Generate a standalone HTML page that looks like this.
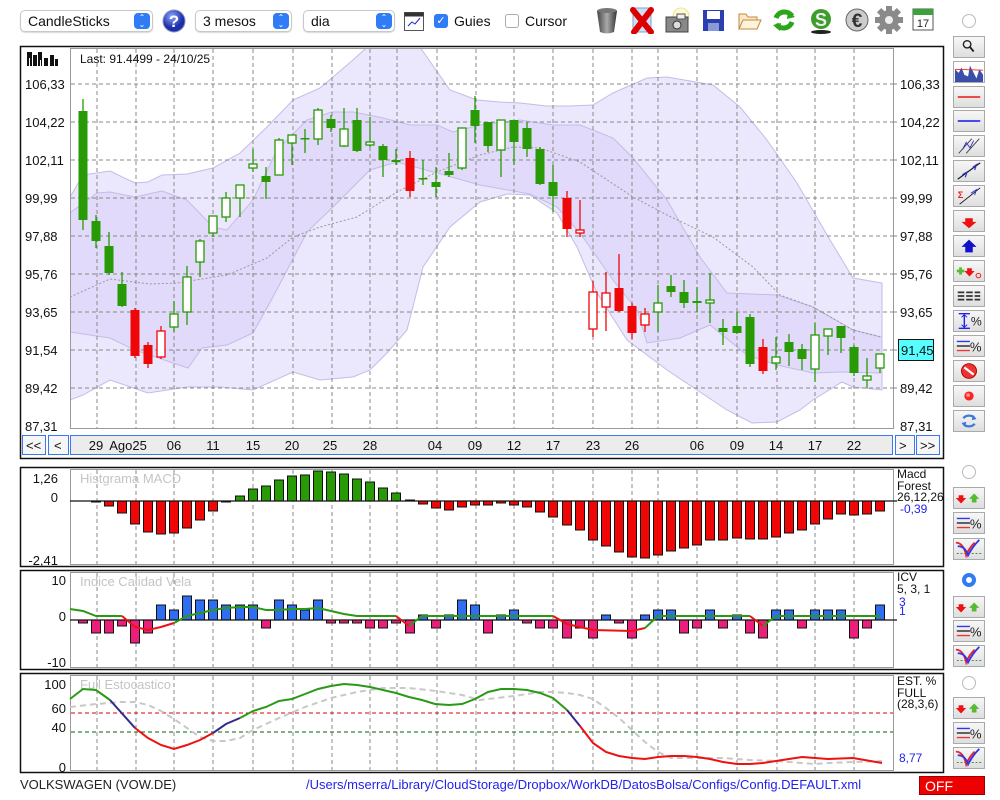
<!DOCTYPE html>
<html><head><meta charset="utf-8"><style>
*{margin:0;padding:0;box-sizing:border-box}
body{width:1000px;height:800px;background:#fff;font-family:"Liberation Sans",sans-serif;position:relative;overflow:hidden;color:#111}
.sel{position:absolute;top:10px;height:22px;border:1px solid #c8c8c8;border-radius:5px;background:#fff;font-size:14px;padding:2px 0 0 7px;box-shadow:0 1px 1px rgba(0,0,0,.15)}
.sel .ar{position:absolute;right:2px;top:2px;width:16px;height:16px;border-radius:4px;background:#2f7cf6;color:#fff;font-size:8px;line-height:7px;text-align:center;padding-top:1px}
.cb{position:absolute;top:14px;width:14px;height:14px;border-radius:3px}
.lbl{position:absolute;top:13px;font-size:14px}
.sb{position:absolute;left:953px;width:32px;height:22px;border:1px solid #aaa;background:linear-gradient(#f7f7f7,#dedede)}
.rad{position:absolute;left:962px;width:14px;height:14px;border-radius:50%;border:1px solid #bbb;background:#fff}
.ic{position:absolute;top:6px}
</style></head><body>
<div class="sel" style="left:20px;width:133px">CandleSticks<div class="ar">⌃<br>⌄</div></div>
<svg style="position:absolute;left:162px;top:9px" width="24" height="24"><defs><radialGradient id="qg" cx="40%" cy="30%"><stop offset="0" stop-color="#8ea8ff"/><stop offset="1" stop-color="#1c2fa8"/></radialGradient></defs><circle cx="12" cy="12" r="11" fill="url(#qg)" stroke="#8890c0"/><text x="12" y="18" text-anchor="middle" font-size="17" font-weight="bold" fill="#fff" font-family="Liberation Sans">?</text></svg>
<div class="sel" style="left:195px;width:97px">3 mesos<div class="ar">⌃<br>⌄</div></div>
<div class="sel" style="left:303px;width:92px">dia<div class="ar">⌃<br>⌄</div></div>
<svg style="position:absolute;left:404px;top:12px" width="20" height="19"><rect x="0.5" y="0.5" width="19" height="18" fill="#fff" stroke="#555"/><rect x="0.5" y="0.5" width="19" height="4" fill="#333"/><path d="M4 14 L8 10 L11 12 L16 6" stroke="#22c" fill="none"/></svg>
<div class="cb" style="left:434px;background:#2f7cf6;color:#fff;font-size:11px;text-align:center;line-height:14px">✓</div>
<div class="lbl" style="left:454px">Guies</div>
<div class="cb" style="left:505px;border:1px solid #aaa;background:#fff"></div>
<div class="lbl" style="left:525px">Cursor</div>
<svg class="ic" style="left:585px" width="24" height="28"><defs><linearGradient id="tg" x1="0" x2="1"><stop offset="0" stop-color="#444"/><stop offset=".5" stop-color="#aaa"/><stop offset="1" stop-color="#333"/></linearGradient></defs><ellipse cx="12" cy="5" rx="10" ry="3" fill="#777"/><path d="M2 5 L5 26 Q12 29 19 26 L22 5 Q12 9 2 5Z" fill="url(#tg)"/></svg>
<svg class="ic" style="left:620px" width="26" height="28"><rect x="3" y="2" width="18" height="24" fill="#cfe0f5" stroke="#7aa0d8"/><path d="M3 4 L21 26 M21 4 L4 26" stroke="#d00" stroke-width="6" stroke-linecap="round"/></svg>
<svg class="ic" style="left:654px" width="26" height="28"><circle cx="17" cy="10" r="8" fill="#fffbd0" stroke="#e8e4a0"/><rect x="2" y="11" width="22" height="15" fill="#888" stroke="#444"/><circle cx="13" cy="19" r="4" fill="#ddd" stroke="#333"/><rect x="13" y="8" width="8" height="5" fill="#eee" stroke="#555"/></svg>
<svg class="ic" style="left:692px" width="24" height="28"><rect x="1" y="4" width="21" height="21" fill="#2c3fb0"/><rect x="5" y="5" width="13" height="8" fill="#fff"/><rect x="6" y="17" width="11" height="8" fill="#8a9ad8"/></svg>
<svg class="ic" style="left:727px" width="26" height="28"><path d="M2 8 L9 8 L11 11 L20 11 L20 23 L2 23Z" fill="#fbe8c8" stroke="#c08a40"/><path d="M2 23 L6 14 L24 14 L20 23Z" fill="#fff2dc" stroke="#c08a40"/></svg>
<svg class="ic" style="left:761px" width="26" height="28"><path d="M5 12 A9 9 0 0 1 21 10" stroke="#2aa61a" stroke-width="5" fill="none"/><path d="M21 16 A9 9 0 0 1 5 18" stroke="#2aa61a" stroke-width="5" fill="none"/><path d="M17 5 L24 11 L16 13Z" fill="#2aa61a"/><path d="M9 25 L2 19 L10 17Z" fill="#2aa61a"/></svg>
<svg class="ic" style="left:798px" width="26" height="28"><ellipse cx="13" cy="26" rx="10" ry="2" fill="#222"/><circle cx="13" cy="13" r="10" fill="#3c9c2c"/><text x="13" y="20" text-anchor="middle" font-size="18" font-weight="bold" fill="#eee" font-family="Liberation Sans">S</text></svg>
<svg class="ic" style="left:833px" width="26" height="28"><circle cx="14" cy="14" r="11" fill="#ccc" stroke="#666"/><text x="14" y="21" text-anchor="middle" font-size="19" font-weight="bold" fill="#333" font-family="Liberation Sans">€</text></svg>
<svg class="ic" style="left:865px" width="28" height="28"><g fill="#8a8a8a"><circle cx="14" cy="14" r="10"/><rect x="11" y="0" width="6" height="28"/><rect x="0" y="11" width="28" height="6"/><rect x="11" y="0" width="6" height="28" transform="rotate(45 14 14)"/><rect x="11" y="0" width="6" height="28" transform="rotate(-45 14 14)"/></g><circle cx="14" cy="14" r="4" fill="#eee"/></svg>
<svg class="ic" style="left:902px" width="22" height="26"><rect x="1" y="3" width="20" height="21" fill="#fff" stroke="#555"/><rect x="1" y="3" width="20" height="6" fill="#3ca03c"/><text x="11" y="21" text-anchor="middle" font-size="11" fill="#222" font-family="Liberation Sans">17</text></svg>
<div class="rad" style="top:14px"></div>

<div id="side"></div>

<svg id="ch" style="position:absolute;left:0;top:0" width="1000" height="800" font-family="Liberation Sans"></svg>

<div style="position:absolute;left:20px;top:777px;font-size:13px;color:#222">VOLKSWAGEN (VOW.DE)</div>
<div style="position:absolute;left:306px;top:777px;font-size:13px;color:#2222ee">/Users/mserra/Library/CloudStorage/Dropbox/WorkDB/DatosBolsa/Configs/Config.DEFAULT.xml</div>
<div style="position:absolute;left:919px;top:776px;width:66px;height:19px;background:#ee0000;border:1px solid #900;color:#fff;font-size:14px;padding:1px 0 0 5px">OFF</div>

<script>
(function(){
var S=document.getElementById('ch');var h='';
var NS=function(a){return a.map(function(p){return p.join(',')}).join(' ')};
var vx=[97,136,174,213,253,293,332,370,397,437,476,514,553,593,632,658,697,737,777,815,854];
function vgrid(y1,y2){var s='';vx.forEach(function(x){s+='<line x1="'+x+'" y1="'+y1+'" x2="'+x+'" y2="'+y2+'" stroke="#888" stroke-dasharray="4,3"/>'});return s}
function txt(x,y,t,o){o=o||{};return '<text x="'+x+'" y="'+y+'" font-size="'+(o.fs||13)+'" fill="'+(o.c||'#111')+'" '+(o.a?'text-anchor="'+o.a+'"':'')+'>'+t+'</text>'}
h+='<rect x="20.5" y="46.5" width="923" height="412" fill="#fff" stroke="#111" stroke-width="1.5"/>';
h+='<rect x="70.5" y="48.5" width="823" height="380" fill="#fff" stroke="#999"/>';
h+='<clipPath id="cp"><rect x="71" y="49" width="822" height="379"/></clipPath>';
var ou=[[70,197],[83,175],[110,171],[135,183],[148,182],[162,175],[187,174],[213,168],[240,153],[267,127],[293,100],[320,88],[353,60],[375,40],[415,40],[450,90],[477,100],[500,102],[520,103],[547,106],[570,106],[593,105],[613,93],[647,78],[667,77],[713,85],[740,107],[767,140],[797,183],[830,240],[853,278],[882,283]];
var ol=[[882,390],[853,387],[842,382],[813,400],[800,410],[777,422],[752,423],[727,410],[697,390],[667,370],[627,340],[597,293],[577,247],[557,213],[530,195],[507,194],[480,202],[450,227],[423,267],[407,330],[387,353],[370,370],[353,377],[320,380],[293,372],[253,390],[220,387],[187,387],[148,393],[110,380],[83,395],[70,400]];
var iu=[[70,213],[97,193],[110,192],[135,197],[162,191],[187,200],[213,227],[227,230],[253,200],[277,150],[307,120],[332,112],[353,112],[383,118],[410,125],[437,125],[453,132],[480,125],[520,120],[553,125],[580,125],[613,138],[633,158],[667,200],[700,257],[727,293],[777,295],[813,307],[853,330],[882,337]];
var il=[[882,373],[842,372],[813,373],[777,365],[747,355],[710,325],[680,338],[647,343],[637,310],[613,280],[580,233],[557,207],[530,194],[480,185],[437,173],[397,162],[370,170],[333,207],[307,232],[273,297],[253,333],[227,345],[202,348],[188,368],[173,363],[135,350],[110,338],[70,332]];
var ma=[[70,297],[110,279],[150,284],[177,283],[227,275],[267,258],[293,237],[320,227],[357,217],[397,192],[437,172],[480,155],[513,147],[540,148],[580,162],[633,197],[667,215],[713,237],[753,267],[780,295],[813,307],[853,330],[880,337]];
h+='<g clip-path="url(#cp)"><polygon points="'+NS(ou.concat(ol))+'" fill="#ebe7fc" stroke="#c4bce6"/><polygon points="'+NS(iu.concat(il))+'" fill="#e1dafa" stroke="#c4bce6"/><polyline points="'+NS(ma)+'" fill="none" stroke="#999" stroke-dasharray="2,2"/></g>';
for(var i=0;i<9;i++){var y=84+i*38;h+='<line x1="71" y1="'+y+'" x2="893" y2="'+y+'" stroke="#888" stroke-dasharray="4,3"/><line x1="893" y1="'+y+'" x2="897" y2="'+y+'" stroke="#888"/>'}
h+=vgrid(49,428);
var lab=['106,33','104,22','102,11','99,99','97,88','95,76','93,65','91,54','89,42','87,31'];
lab.forEach(function(t,i){var y=89+i*38;h+=txt(25,y,t);if(t!='91,54')h+=txt(900,y,t)});
h+='<rect x="898.5" y="339.5" width="35" height="21" fill="#5ff" stroke="#111"/>'+txt(901,355,'91,45');
h+=txt(80,63,'Last: 91.4499 - 24/10/25',{fs:12});
h+='<g fill="#111"><rect x="27" y="52" width="5" height="14"/><rect x="33" y="55" width="4" height="11"/><rect x="38" y="52" width="4" height="14"/><rect x="44" y="58" width="4" height="8"/><rect x="50" y="55" width="4" height="11"/><rect x="55" y="59" width="3" height="7"/></g><g fill="#fff"><rect x="29" y="58" width="1" height="8"/><rect x="40" y="60" width="1" height="6"/></g>';
var C=[[83,111,220,99,230,'g'],[96,221,241,215,248,'g'],[109,246,273,232,275,'g'],[122,284,306,272,307,'g'],[135,310,356,308,358,'r'],[148,345,364,342,368,'r'],[161,331,357,326,359,'wr'],[174,314,327,301,332,'w'],[187,277,312,266,325,'w'],[200,241,262,239,277,'w'],[213,216,233,216,237,'w'],[226,198,217,192,222,'w'],[240,185,198,185,217,'w'],[253,164,168,149,172,'w'],[266,176,182,167,199,'g'],[279,140,175,138,175,'w'],[292,135,143,135,165,'w'],[305,138,139,129,153,'g'],[318,110,139,108,145,'w'],[331,119,128,115,132,'g'],[344,129,146,108,147,'w'],[357,120,151,108,152,'g'],[370,142,145,117,147,'w'],[383,146,160,144,177,'g'],[396,160,162,149,165,'g'],[410,158,191,151,197,'r'],[423,178,179,160,185,'g'],[436,182,187,167,197,'g'],[449,171,175,153,177,'g'],[462,128,168,128,170,'w'],[475,110,126,96,143,'g'],[488,122,146,122,152,'g'],[501,120,150,120,177,'w'],[514,120,142,120,165,'g'],[527,128,149,122,157,'g'],[540,149,184,147,185,'g'],[553,182,196,165,212,'g'],[567,198,229,191,237,'r'],[580,230,233,200,237,'wr'],[593,292,329,281,337,'wr'],[606,293,307,272,331,'wr'],[619,288,311,254,312,'r'],[632,306,333,303,339,'r'],[645,314,325,308,332,'wr'],[658,303,312,285,332,'w'],[671,286,292,275,297,'g'],[684,292,303,280,308,'g'],[697,301,303,287,312,'g'],[710,300,303,273,323,'w'],[723,328,332,319,345,'g'],[737,326,333,312,334,'g'],[750,317,364,314,367,'g'],[763,347,371,339,374,'r'],[776,357,363,337,370,'w'],[789,342,352,334,366,'g'],[802,349,359,344,370,'g'],[815,335,369,323,382,'w'],[828,329,336,329,355,'w'],[841,326,338,326,353,'g'],[854,347,373,345,376,'g'],[867,376,380,358,388,'w'],[880,354,368,354,373,'w']];
var G='#279a05',R='#ef0707';
C.forEach(function(c){var x=c[0],t=c[1],b=c[2],wt=c[3],wb=c[4],k=c[5];var col=(k=='g'||k=='w')?G:R;var hh=Math.max(b-t,1.5);
h+='<line x1="'+x+'" y1="'+wt+'" x2="'+x+'" y2="'+wb+'" stroke="'+col+'" stroke-width="1.3"/>';
if(k=='g'||k=='r')h+='<rect x="'+(x-4.5)+'" y="'+t+'" width="9" height="'+hh+'" fill="'+col+'"/>';
else h+='<rect x="'+(x-4)+'" y="'+t+'" width="8" height="'+hh+'" fill="#fff" stroke="'+col+'" stroke-width="1.3"/>';});
h+='<rect x="22.5" y="435.5" width="23" height="19" fill="#f6f6f6" stroke="#3a78f0"/><rect x="48.5" y="435.5" width="20" height="19" fill="#f6f6f6" stroke="#3a78f0"/><rect x="70.5" y="435.5" width="822" height="19" fill="#ececec" stroke="#3a78f0"/><rect x="895.5" y="435.5" width="19" height="19" fill="#f6f6f6" stroke="#3a78f0"/><rect x="916.5" y="435.5" width="23" height="19" fill="#f6f6f6" stroke="#3a78f0"/>';
h+=txt(26,450,'&lt;&lt;')+txt(54,450,'&lt;')+txt(899,450,'&gt;')+txt(920,450,'&gt;&gt;');
[[96,'29'],[128,'Ago25'],[174,'06'],[213,'11'],[253,'15'],[292,'20'],[330,'25'],[370,'28'],[435,'04'],[475,'09'],[514,'12'],[553,'17'],[593,'23'],[632,'26'],[697,'06'],[737,'09'],[776,'14'],[815,'17'],[854,'22']].forEach(function(d){h+=txt(d[0],450,d[1],{a:'middle'})});
function panel(y1,y2){return '<rect x="20.5" y="'+(y1+0.5)+'" width="923" height="'+(y2-y1)+'" fill="#fff" stroke="#111" stroke-width="1.5"/><rect x="70.5" y="'+(y1+2.5)+'" width="823" height="'+(y2-y1-4)+'" fill="#fff" stroke="#999"/>'+vgrid(y1+3,y2-2)}
h+=panel(467,566);
h+=txt(80,483,'Histgrama MACD',{c:'#c4c4c4'});
h+=txt(58,483,'1,26',{a:'end'})+txt(58,502,'0',{a:'end'})+txt(58,565,'-2,41',{a:'end'});
var M=[0,-1,-5,-12,-23,-31,-33,-32,-27,-19,-10,-1,5,12,15,21,25,26,30,29,27,22,19,13,8,1,-3,-7,-9,-6,-4,-4,-2,-4,-6,-11,-16,-24,-29,-39,-45,-51,-56,-57,-54,-50,-47,-44,-39,-39,-37,-38,-38,-36,-32,-29,-23,-18,-13,-14,-13,-10];
M.forEach(function(v,i){if(!C[i]||v==0)return;var x=C[i][0];var y=v>0?501-v:501;h+='<rect x="'+(x-4.5)+'" y="'+y+'" width="9" height="'+Math.abs(v)+'" fill="'+(v>0?G:R)+'" stroke="#111"/>'});
h+='<line x1="70" y1="501" x2="897" y2="501" stroke="#111" stroke-width="1.3"/>';
h+=txt(897,478,'Macd',{fs:12})+txt(897,490,'Forest',{fs:12})+txt(897,501,'26,12,26',{fs:12})+txt(900,513,'-0,39',{fs:12,c:'#2222ee'});
h+=panel(570,669);
h+=txt(80,586,'Indice Calidad Vela',{c:'#c4c4c4'});
h+=txt(66,585,'10',{a:'end'})+txt(66,621,'0',{a:'end'})+txt(66,667,'-10',{a:'end'});
var V=[-3,-13,-13,-6,-23,-13,15,10,24,20,20,15,15,15,-8,20,15,10,20,-3,-3,-3,-8,-8,-3,-13,5,-8,5,20,15,-13,5,10,-3,-8,-8,-18,-8,-18,5,-3,-18,5,10,10,-13,-8,10,-8,5,-13,-18,10,10,-8,10,10,10,-18,-8,15];
V.forEach(function(v,i){if(!C[i])return;var x=C[i][0];var y=v>0?620-v:620;h+='<rect x="'+(x-4.5)+'" y="'+y+'" width="9" height="'+Math.abs(v)+'" fill="'+(v>0?'#2f6ef0':'#ea1f7c')+'" stroke="#111"/>'});
h+='<line x1="70" y1="620" x2="897" y2="620" stroke="#111" stroke-width="1.3"/>';
var lg=function(p,c){return '<polyline points="'+NS(p)+'" fill="none" stroke="'+c+'" stroke-width="2"/>'};
h+=lg([[70,609],[83,611],[96,616],[122,616]],'#2a9a14')+lg([[122,616],[135,627],[148,630],[161,627],[174,623]],'#ee1111')+lg([[174,623],[187,616],[200,613],[213,610],[226,608],[240,607],[253,607],[266,610],[279,610],[292,609],[305,609],[318,608],[331,611],[344,614],[357,616],[396,616]],'#2a9a14')+lg([[396,616],[409,626]],'#ee1111')+lg([[409,626],[422,616],[553,616]],'#2a9a14')+lg([[553,616],[567,624],[593,630],[632,631],[645,628]],'#ee1111')+lg([[645,628],[658,616],[750,616]],'#2a9a14')+lg([[750,616],[763,626]],'#ee1111')+lg([[763,626],[776,616],[880,616]],'#2a9a14');
h+=txt(897,581,'ICV',{fs:12})+txt(897,593,'5, 3, 1',{fs:12})+txt(899,606,'3',{fs:12,c:'#2222ee'})+txt(899,615,'1',{fs:12,c:'#2222ee'});
h+=panel(673,772);
h+=txt(80,689,'Full Estocastico',{c:'#c4c4c4'});
h+='<line x1="71" y1="713" x2="893" y2="713" stroke="#d00" stroke-dasharray="4,3"/><line x1="71" y1="732" x2="893" y2="732" stroke="#060" stroke-dasharray="4,3"/>';
h+=txt(66,689,'100',{a:'end'})+txt(66,713,'60',{a:'end'})+txt(66,732,'40',{a:'end'})+txt(66,772,'0',{a:'end'});
h+='<polyline points="'+NS([[70,707],[96,704],[122,702],[135,702],[148,705],[161,711],[174,719],[187,728],[200,737],[213,741],[226,741],[240,738],[253,730],[279,718],[305,707],[331,698],[357,692],[383,688],[409,688],[436,691],[462,695],[480,700],[514,696],[540,692],[553,692],[567,693],[580,695],[593,699],[606,708],[619,718],[632,730],[645,742],[658,752],[671,758],[697,758],[723,758],[750,760],[776,761],[802,763],[815,764],[828,763],[854,762],[882,761]])+'" fill="none" stroke="#c8c8c8" stroke-width="2" stroke-dasharray="6,4"/>';
h+=lg([[70,699],[83,689],[96,690],[110,700]],'#2a9a14')+lg([[110,700],[135,728]],'#332a8a')+lg([[135,728],[148,738],[161,745],[174,749],[187,745],[200,740],[213,733]],'#ee1111')+lg([[213,733],[226,724],[240,718]],'#332a8a')+lg([[240,718],[253,711],[266,707],[279,701],[292,699],[305,694],[318,689],[331,686],[344,684],[357,685],[370,687],[383,690],[396,693],[409,697],[422,700],[435,704],[449,705],[462,704],[475,699],[488,692],[501,689],[514,689],[527,690],[540,693],[553,698],[567,710]],'#2a9a14')+lg([[567,710],[580,726]],'#332a8a')+lg([[580,726],[593,743],[606,752],[619,756],[632,758],[645,759],[658,757],[671,756],[684,756],[697,757],[710,759],[723,762],[737,764],[750,764],[763,763],[776,761],[789,759],[802,757],[815,758],[828,759],[853,758],[882,763]],'#ee1111');
h+=txt(897,685,'EST. %',{fs:12})+txt(897,697,'FULL',{fs:12})+txt(897,708,'(28,3,6)',{fs:12})+txt(899,762,'8,77',{fs:12,c:'#2222ee'});
S.innerHTML=h;
var sd='';
var ico={
mag:'<circle cx="14" cy="8" r="4" fill="none" stroke="#222" stroke-width="1.5"/><line x1="17" y1="11" x2="21" y2="16" stroke="#222" stroke-width="2"/>',
chart:'<rect x="0" y="0" width="32" height="22" fill="#fff"/><path d="M1 22 L1 8 L5 12 L8 6 L11 14 L15 16 L17 4 L20 10 L24 18 L27 8 L31 14 L31 22Z" fill="#3a4fa8"/><path d="M1 8 L31 9" stroke="#e22" />',
hr:'<line x1="4" y1="11" x2="28" y2="11" stroke="#e33" stroke-width="2"/>',
hb:'<line x1="4" y1="11" x2="28" y2="11" stroke="#33e" stroke-width="2"/>',
chan:'<path d="M5 19 L19 3 M13 19 L27 3" stroke="#444"/><path d="M9 15 L13 7 L17 13 L21 5" stroke="#33c" fill="none"/>',
tr:'<path d="M4 20 L28 2" stroke="#111" stroke-width="1.3"/><path d="M9 15 L14 12 L12 18 M20 7 L24 4 L22 10" stroke="#33c" fill="none" stroke-width="1.3"/>',
sig:'<path d="M6 20 L28 2" stroke="#111"/><text x="4" y="13" font-size="10" fill="#e22" font-weight="bold">Σ</text><path d="M18 8 L24 4 L22 10" stroke="#33c" fill="none"/>',
dn:'<path d="M12 8 L20 8 L20 12 L24 12 L16 19 L8 12 L12 12Z" fill="#e11"/>',
up:'<path d="M12 18 L20 18 L20 12 L24 12 L16 4 L8 12 L12 12Z" fill="#11c"/>',
pm:'<path d="M3 11 L11 11 M7 7 L7 15" stroke="#5b3" stroke-width="3"/><path d="M14 8 L19 8 L19 11 L22 11 L16.5 17 L11 11 L14 11Z" fill="#e11"/><circle cx="26" cy="16" r="2.5" fill="none" stroke="#e11"/>',
eq:'<g stroke="#333" stroke-width="2"><line x1="4" y1="7" x2="28" y2="7" stroke-dasharray="7,2"/><line x1="4" y1="11" x2="28" y2="11" stroke-dasharray="7,2"/><line x1="4" y1="15" x2="28" y2="15" stroke-dasharray="7,2"/></g>',
pct1:'<path d="M5 3 L17 3 M5 19 L17 19 M11 4 L11 18" stroke="#22e" stroke-width="1.5"/><path d="M8 7 L11 4 L14 7 M8 15 L11 18 L14 15" stroke="#22e" fill="none"/><text x="18" y="16" font-size="13" fill="#222">%</text>',
pct2:'<line x1="3" y1="6" x2="17" y2="6" stroke="#33e" stroke-width="1.5"/><line x1="3" y1="11" x2="17" y2="11" stroke="#222" stroke-width="1.5"/><line x1="3" y1="16" x2="17" y2="16" stroke="#e33" stroke-width="1.5"/><text x="17" y="17" font-size="14" fill="#222">%</text>',
no:'<circle cx="16" cy="11" r="8" fill="#e33" stroke="#a00"/><line x1="11" y1="7" x2="21" y2="15" stroke="#fff" stroke-width="2.5"/>',
rec:'<circle cx="16" cy="11" r="5" fill="#f22"/><circle cx="15" cy="10" r="2" fill="#f99"/>',
ref:'<path d="M10 8 A7 6 0 0 1 22 8" stroke="#3a7ad8" stroke-width="2.5" fill="none"/><path d="M22 14 A7 6 0 0 1 10 14" stroke="#3a7ad8" stroke-width="2.5" fill="none"/><path d="M20 4 L24 9 L19 10Z M12 18 L8 13 L13 12Z" fill="#3a7ad8"/>',
du:'<path d="M5 8 L10 8 L10 11 L13 11 L7.5 17 L2 11 L5 11Z" fill="#e11"/><path d="M19 16 L24 16 L24 12 L27 12 L21.5 6 L16 12 L19 12Z" fill="#5b3"/>',
vv:'<line x1="3" y1="16" x2="29" y2="16" stroke="#282" stroke-dasharray="2,2"/><path d="M2 4 Q10 4 13 18 Q16 10 22 4" stroke="#e22" stroke-width="2" fill="none"/><path d="M4 8 Q12 8 15 18 Q20 8 27 1" stroke="#33e" stroke-width="2" fill="none"/>'
};
var btns=[['mag',36],['chart',61],['hr',86],['hb',110],['chan',135],['tr',160],['sig',185],['dn',210],['up',235],['pm',260],['eq',285],['pct1',310],['pct2',335],['no',360],['rec',385],['ref',410],['du',487],['pct2',512],['vv',538],['du',596],['pct2',620],['vv',645],['du',697],['pct2',722],['vv',747]];
btns.forEach(function(b){sd+='<div class="sb" style="top:'+b[1]+'px"><svg width="30" height="20" viewBox="0 0 32 22" preserveAspectRatio="none">'+ico[b[0]]+'</svg></div>'});
sd+='<div class="rad" style="top:465px"></div><div class="rad" style="top:676px"></div><div class="rad" style="top:573px;border:4px solid #2f7cf6"></div>';
document.getElementById('side').innerHTML=sd;
})();
</script>
<style>.ic{margin-left:10px}</style>
</body></html>
